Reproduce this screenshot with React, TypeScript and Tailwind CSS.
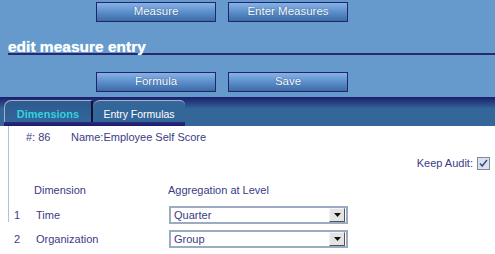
const navBtn =
  "h-[20px] w-[120px] border border-[#24246a] bg-gradient-to-b from-[#86b2e6] via-[#5b8fcb] to-[#3d6ca6] text-[11.5px] text-white flex items-center justify-center [text-shadow:0_0_1px_#1a3a70]"

function NavButton({ label }: { label: string }) {
  return <button className={navBtn}>{label}</button>
}

function Select({ value }: { value: string }) {
  return (
    <div className="h-[18px] w-[179px] border-2 border-[#9aabc2] bg-white flex items-center justify-between">
      <span className="pl-[3px] text-[11px] text-[#3b3b85]">{value}</span>
      <span className="mr-[1px] h-[14px] w-[16px] bg-[#e4e4e4] border border-t-[#f4f4f4] border-l-[#f4f4f4] border-r-[#555] border-b-[#555] flex items-center justify-center">
        <svg width="7" height="4" viewBox="0 0 7 4">
          <path d="M0 0h7L3.5 4z" fill="#111" />
        </svg>
      </span>
    </div>
  )
}

export default function App() {
  const rows = [
    { n: "1", name: "Time", value: "Quarter" },
    { n: "2", name: "Organization", value: "Group" },
  ]

  return (
    <div className="w-[495px] h-[254px] bg-white overflow-hidden font-['Liberation_Sans',Arial,sans-serif]">
      {/* header area */}
      <div className="bg-[#6699cc] pt-[2px] pb-[5px]">
        <div className="flex gap-[12px] pl-[96px]">
          <NavButton label="Measure" />
          <NavButton label="Enter Measures" />
        </div>
        <div className="ml-[8px] mt-[16px] h-[17px] border-b-2 border-[#28286e] text-[15.5px] font-bold leading-[17px] text-white [text-shadow:0_0_1px_#c8f0ff]">
          edit measure entry
        </div>
        <div className="flex gap-[12px] pl-[96px] mt-[17px]">
          <NavButton label="Formula" />
          <NavButton label="Save" />
        </div>
      </div>

      {/* tab band */}
      <div className="h-[29px] bg-gradient-to-b from-[#1c1c6a] via-[#336699] via-40% to-[#336699] pt-[3px] pl-[4px]">
        <div className="flex w-[181px] items-end">
          <div className="h-[22px] w-[89px] rounded-tl-[7px] rounded-tr-[3px] border-t border-l border-[#a8b0c8] border-r-2 border-r-[#10103a] bg-gradient-to-b from-[#2d5a90] to-[#336699] flex items-center justify-center pt-[6px] text-[11px] font-bold text-[#33d0e0]">
            Dimensions
          </div>
          <div className="h-[22px] w-[92px] rounded-tl-[7px] rounded-tr-[5px] border-t border-[#a8b0c8] bg-[#336699] flex items-center justify-center pt-[6px] text-[10.5px] text-white">
            Entry Formulas
          </div>
        </div>
        <div className="h-[4px] w-[181px] bg-gradient-to-b from-[#2a2a80] to-[#1c1c6a]" />
      </div>

      {/* content panel */}
      <div className="ml-[8px] h-[96px] border-l border-[#b0c2d6] text-[11px] text-[#3b3b85]">
        <div className="flex pt-[5px] h-[18px] items-center">
          <span className="pl-[17px] w-[62px]">#: 86</span>
          <span>Name:Employee Self Score</span>
        </div>
        <div className="flex justify-end items-center gap-[4px] pr-[5px] mt-[13px] h-[13px]">
          <span>Keep Audit:</span>
          <span className="h-[13px] w-[13px] border border-[#7d8aa0] bg-[#dde1ea] flex items-center justify-center">
            <svg width="9" height="9" viewBox="0 0 9 9">
              <path d="M1 4.5l2.2 2.5L8 1" stroke="#3a4f98" strokeWidth="1.6" fill="none" />
            </svg>
          </span>
        </div>
        <div className="flex mt-[14px] h-[13px] items-center">
          <span className="pl-[25px] w-[159px]">Dimension</span>
          <span>Aggregation at Level</span>
        </div>
        <div className="mt-[9px] flex flex-col gap-[6px]">
          {rows.map((r) => (
            <div key={r.n} className="flex items-center h-[18px]">
              <span className="pl-[5px] w-[27px]">{r.n}</span>
              <span className="w-[133px]">{r.name}</span>
              <Select value={r.value} />
            </div>
          ))}
        </div>
      </div>
    </div>
  )
}
